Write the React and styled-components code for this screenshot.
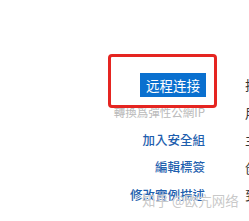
import styled, { createGlobalStyle } from 'styled-components';

const rows = [
  { key: 'connect', value: '挂载' },
  { key: 'eip', value: '用户' },
  { key: 'sg', label: '加入安全組', value: '主机' },
  { key: 'tag', label: '編輯標簽', value: '创建' },
  { key: 'desc', label: '修改實例描述', value: '到期' },
];

const App = () => (
  <>
    <GlobalStyle />
    <Page>
      <Menu>
        {rows.map((row) => (
          <Row key={row.key}>
            <Action>
              {row.key === 'connect' && <PrimaryButton>远程连接</PrimaryButton>}
              {row.key === 'eip' && <Disabled>轉換爲彈性公網IP</Disabled>}
              {row.label && <Link>{row.label}</Link>}
            </Action>
            <Value>{row.value}</Value>
          </Row>
        ))}
      </Menu>
      <Highlight />
      <Watermark>知乎 @欧亢网络</Watermark>
    </Page>
  </>
);

export default App;

const GlobalStyle = createGlobalStyle`
  html, body {
    margin: 0;
    padding: 0;
    background: #fff;
    overflow: hidden;
  }
  body {
    font-family: "Noto Sans CJK TC", "Noto Sans CJK SC", "Liberation Sans", sans-serif;
  }
`;

const Page = styled.div`
  position: relative;
  width: 249px;
  height: 221px;
  overflow: hidden;
`;

const Menu = styled.div`
  display: flex;
  flex-direction: column;
  padding-top: 71px;
`;

const Row = styled.div`
  display: grid;
  grid-template-columns: 206px 1fr;
  column-gap: 39px;
  height: 27.5px;
  align-items: center;
`;

const Action = styled.div`
  display: flex;
  justify-content: flex-end;
  align-items: center;
`;

const PrimaryButton = styled.button`
  width: 66px;
  height: 24px;
  border: 0;
  border-radius: 0;
  padding: 0;
  background: #0a70cf;
  color: #fff;
  font-family: inherit;
  font-size: 13.5px;
  line-height: 24px;
`;

const Disabled = styled.span`
  color: #bababa;
  font-size: 11.5px;
  line-height: 14px;
  white-space: nowrap;
  margin-right: 1px;
`;

const Link = styled.span`
  color: #1f5fae;
  font-size: 12.5px;
  line-height: 14px;
  font-weight: 500;
  white-space: nowrap;
  margin-right: 1px;
`;

const Value = styled.span`
  color: #333;
  font-size: 13px;
  white-space: nowrap;
  overflow: hidden;
`;

const Highlight = styled.div`
  position: absolute;
  left: 108px;
  top: 54px;
  width: 109px;
  height: 54px;
  box-sizing: border-box;
  border: 3px solid #e52521;
  border-radius: 4px;
`;

const Watermark = styled.div`
  position: absolute;
  left: 142px;
  top: 191px;
  font-size: 13.5px;
  line-height: 18px;
  color: rgba(170, 170, 170, 0.65);
  text-shadow: 0 0 1px #fff, 0 0 1px #fff;
  white-space: nowrap;
  pointer-events: none;
`;
